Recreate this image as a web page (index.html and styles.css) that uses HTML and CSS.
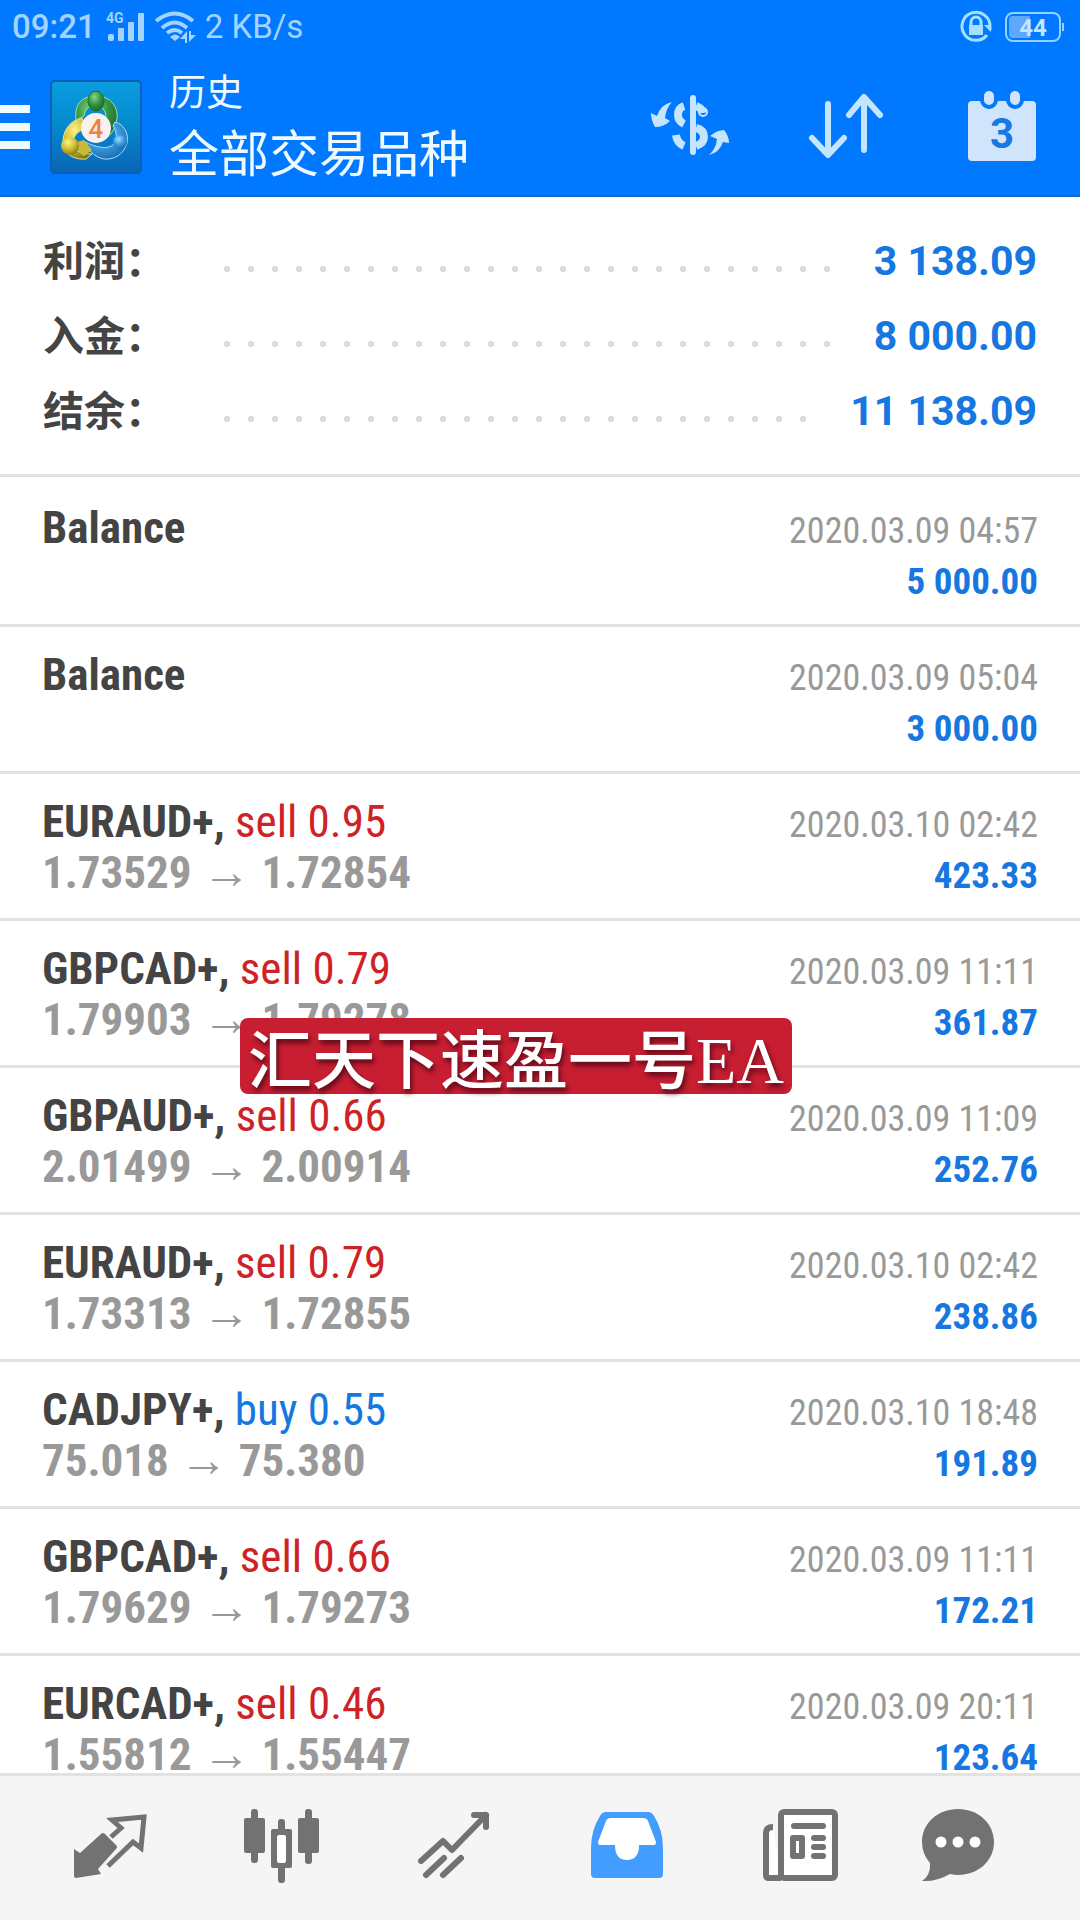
FILE: index.html
```html
<!DOCTYPE html>
<html lang="zh-CN">
<head>
<meta charset="utf-8">
<meta name="viewport" content="width=device-width, initial-scale=1">
<title>历史</title>
<link rel="stylesheet" href="styles.css">
</head>
<body>
<div class="app">
  <header class="header">
    <div class="status">
      <span class="clock">09:21</span>
      <svg class="signal" width="40" height="32" viewBox="0 0 40 32" aria-hidden="true">
        <text x="0" y="12" class="signal-text">4G</text>
        <rect x="2" y="23" width="6" height="7" rx="2"/><rect x="12" y="17" width="6" height="13" rx="1"/><rect x="22" y="11" width="6" height="19" rx="1"/><rect x="32" y="2" width="6" height="28" rx="1"/>
      </svg>
      <svg class="wifi" width="42" height="32" viewBox="0 0 42 32" aria-hidden="true">
        <g fill="none" stroke="currentColor" stroke-width="4"><path d="M1 10Q20 -5 38 10"/><path d="M7 17Q20 6 32 17"/><path d="M12 22Q20 16 27 22"/></g>
        <path d="M15 26Q20 21 25 26L20 30Z"/><path d="M25 28L32 20V32H30V28ZM34 20H36V24H41L34 31Z"/>
      </svg>
      <span class="speed">2 KB/s</span>
      <svg class="lock" width="34" height="34" viewBox="0 0 34 34" aria-hidden="true">
        <path d="M28 25A14 14 0 1 1 31 17V20" fill="none" stroke="currentColor" stroke-width="3"/>
        <path d="M25 15H32V22Z"/><rect x="10" y="15" width="14" height="10"/><path d="M12 16V12A5 5 0 0 1 22 12V16" fill="none" stroke="currentColor" stroke-width="3"/>
      </svg>
      <span class="battery">44</span>
    </div>
    <div class="toolbar">
      <button class="menu" aria-label="菜单"><i></i><i></i><i></i></button>
      <svg class="logo" width="92" height="94" viewBox="0 0 92 94" aria-hidden="true">
        <defs>
          <linearGradient id="sky" x1="0" y1="0" x2="0" y2="1"><stop offset="0" stop-color="#0a9ee0"/><stop offset=".5" stop-color="#0488cd"/><stop offset="1" stop-color="#0a64b8"/></linearGradient>
          <radialGradient id="green" cx=".4" cy=".3" r=".8"><stop offset="0" stop-color="#8fd47e"/><stop offset=".5" stop-color="#349440"/><stop offset="1" stop-color="#125f2b"/></radialGradient>
          <radialGradient id="gold" cx=".4" cy=".3" r=".8"><stop offset="0" stop-color="#fff38a"/><stop offset=".5" stop-color="#d0bb2c"/><stop offset="1" stop-color="#6f6e12"/></radialGradient>
          <radialGradient id="blue" cx=".4" cy=".3" r=".8"><stop offset="0" stop-color="#a5dcff"/><stop offset=".5" stop-color="#3a96da"/><stop offset="1" stop-color="#1262ab"/></radialGradient>
        </defs>
        <rect x="1" y="1" width="90" height="92" rx="4" fill="url(#sky)" stroke="#0c5fb5" stroke-width="2"/>
        <path d="M32 38C22 40 14 48 13 60C12 74 24 80 36 79L42 74C30 74 22 70 23 62C24 53 31 50 36 48Z" fill="url(#gold)" stroke="#e9e79a"/>
        <path d="M26 40C24 22 34 16 46 16C60 16 68 26 67 38C66 48 62 54 54 60L56 38C56 30 52 26 45 26C38 26 35 30 34 36Z" fill="url(#green)" stroke="#a8e0a0"/>
        <path d="M65 42C74 44 79 54 77 63C74 75 63 80 54 79C44 77 38 70 35 62C44 66 57 71 64 64C68 58 66 50 63 46Z" fill="url(#blue)" stroke="#a8dcff"/>
        <path d="M27 62L34 60L42 70L34 76Q26 72 27 62Z" fill="#c9bb3a"/>
        <ellipse cx="46" cy="21" rx="8" ry="10" fill="url(#green)" stroke="#1a6e36"/>
        <circle cx="20" cy="66" r="9" fill="url(#gold)"/><circle cx="70" cy="62" r="7" fill="url(#blue)"/>
        <circle cx="46" cy="48" r="15" fill="#f8f1ee"/>
        <text x="46" y="58" text-anchor="middle" class="logo-digit">4</text>
      </svg>
      <div class="titles">
        <h1 class="title">历史</h1>
        <p class="subtitle">全部交易品种</p>
      </div>
      <div class="actions">
        <button class="action" aria-label="货币">
          <svg width="96" height="96" viewBox="0 0 96 96" aria-hidden="true">
            <rect x="48" y="18" width="6" height="60" rx="3"/>
            <g fill="none" stroke="currentColor" stroke-width="8"><path d="M42 29Q36 31 36 38Q36 44 42 47"/><path d="M54 29Q60 31 61 36"/><circle cx="61" cy="35" r="1"/><path d="M54 51Q62 53 62 60Q62 66 54 69"/><path d="M34 58Q35 66 42 69"/></g>
            <path d="M30 25Q24 31 23 41L28 44Q22 50 13 50Q9 43 9 36L15 39Q19 27 30 25ZM67 78Q74 72 75 62L68 59Q75 53 82 53Q87 59 87 66L81 65Q77 76 67 78Z"/>
          </svg>
        </button>
        <button class="action" aria-label="排序">
          <svg width="96" height="96" viewBox="0 0 96 96" aria-hidden="true"><path d="M30 27V77M14 61L30 78L46 61M66 73V21M51 38L66 20L82 38" fill="none" stroke="currentColor" stroke-width="6" stroke-linecap="round" stroke-linejoin="round"/></svg>
        </button>
        <button class="action calendar" aria-label="日期">
          <svg width="96" height="96" viewBox="0 0 96 96" aria-hidden="true"><rect x="14" y="24" width="68" height="60" rx="4"/><g stroke="#0078ff" stroke-width="4"><rect x="28" y="12" width="14" height="18" rx="7"/><rect x="54" y="12" width="14" height="18" rx="7"/></g><text x="48" y="71" text-anchor="middle" class="calendar-day">3</text></svg>
        </button>
      </div>
    </div>
  </header>

  <main class="content">
    <dl class="summary">
      <div class="sum-row"><dt>利润：</dt><dd>3 138.09</dd></div>
      <div class="sum-row"><dt>入金：</dt><dd>8 000.00</dd></div>
      <div class="sum-row"><dt>结余：</dt><dd>11 138.09</dd></div>
    </dl>
    <ul class="deals">
      <li class="deal"><div class="line"><b class="symbol">Balance</b><time>2020.03.09 04:57</time></div><div class="line"><b class="profit">5 000.00</b></div></li>
      <li class="deal"><div class="line"><b class="symbol">Balance</b><time>2020.03.09 05:04</time></div><div class="line"><b class="profit">3 000.00</b></div></li>
      <li class="deal"><div class="line"><span class="symbol"><b>EURAUD+,</b> <span class="sell">sell 0.95</span></span><time>2020.03.10 02:42</time></div><div class="line"><b class="price">1.73529<span class="to">→</span>1.72854</b><b class="profit">423.33</b></div></li>
      <li class="deal"><div class="line"><span class="symbol"><b>GBPCAD+,</b> <span class="sell">sell 0.79</span></span><time>2020.03.09 11:11</time></div><div class="line"><b class="price">1.79903<span class="to">→</span>1.79278</b><b class="profit">361.87</b></div></li>
      <li class="deal"><div class="line"><span class="symbol"><b>GBPAUD+,</b> <span class="sell">sell 0.66</span></span><time>2020.03.09 11:09</time></div><div class="line"><b class="price">2.01499<span class="to">→</span>2.00914</b><b class="profit">252.76</b></div></li>
      <li class="deal"><div class="line"><span class="symbol"><b>EURAUD+,</b> <span class="sell">sell 0.79</span></span><time>2020.03.10 02:42</time></div><div class="line"><b class="price">1.73313<span class="to">→</span>1.72855</b><b class="profit">238.86</b></div></li>
      <li class="deal"><div class="line"><span class="symbol"><b>CADJPY+,</b> <span class="buy">buy 0.55</span></span><time>2020.03.10 18:48</time></div><div class="line"><b class="price">75.018<span class="to">→</span>75.380</b><b class="profit">191.89</b></div></li>
      <li class="deal"><div class="line"><span class="symbol"><b>GBPCAD+,</b> <span class="sell">sell 0.66</span></span><time>2020.03.09 11:11</time></div><div class="line"><b class="price">1.79629<span class="to">→</span>1.79273</b><b class="profit">172.21</b></div></li>
      <li class="deal"><div class="line"><span class="symbol"><b>EURCAD+,</b> <span class="sell">sell 0.46</span></span><time>2020.03.09 20:11</time></div><div class="line"><b class="price">1.55812<span class="to">→</span>1.55447</b><b class="profit">123.64</b></div></li>
    </ul>
  </main>

  <nav class="tabs">
    <a href="#quotes" aria-label="行情"><svg width="96" height="96" viewBox="0 0 96 96" aria-hidden="true"><path d="M12 49L18 53L39 34Q41 32 43 34L54 45Q56 47 54 49L36 69L39 74L14 78Q12 78 12 76Z"/><path d="M49 37L59 28L50 20L82 17L79 48L71 42L46 66" fill="none" stroke="currentColor" stroke-width="5"/></svg></a>
    <a href="#charts" aria-label="图表"><svg width="96" height="96" viewBox="0 0 96 96" aria-hidden="true"><rect x="10" y="18" width="21" height="35" rx="2"/><rect x="17" y="9" width="7" height="54" rx="3"/><rect x="37" y="29" width="21" height="39" rx="2"/><rect x="44" y="19" width="7" height="64" rx="3"/><rect x="43" y="35" width="9" height="28" rx="2" fill="#fff"/><rect x="64" y="18" width="21" height="35" rx="2"/><rect x="71" y="9" width="7" height="55" rx="3"/></svg></a>
    <a href="#trade" aria-label="交易"><svg width="96" height="96" viewBox="0 0 96 96" aria-hidden="true"><path d="M15 61L37 41L46 50L80 15M68 15H80V27M20 75L38 58M37 75L55 58" fill="none" stroke="currentColor" stroke-width="6" stroke-linecap="round" stroke-linejoin="round"/></svg></a>
    <a href="#history" class="active" aria-label="历史" aria-current="page"><svg width="96" height="96" viewBox="0 0 96 96" aria-hidden="true"><path d="M28 12H70Q74 12 76 16Q85 30 85 48V74Q85 78 81 78H17Q13 78 13 74V48Q13 30 22 16Q24 12 28 12Z"/><path d="M33 18H65Q69 18 70 21L78 42Q78 45 76 45H61Q61 60 49 60Q37 60 37 45H22Q20 45 20 42L28 21Q29 18 33 18Z" fill="#fff"/></svg></a>
    <a href="#news" aria-label="新闻"><svg width="96" height="96" viewBox="0 0 96 96" aria-hidden="true"><g fill="#fff" stroke="currentColor" stroke-width="6"><path d="M23 27Q16 27 16 33V75Q16 78 19 78H31"/><rect x="31" y="12" width="54" height="66" rx="3"/></g><rect x="41" y="23" width="35" height="6" rx="3"/><rect x="40" y="35" width="15" height="24" rx="3"/><rect x="46" y="41" width="3" height="12" fill="#fff"/><rect x="61" y="35" width="15" height="6" rx="3"/><rect x="61" y="44" width="15" height="6" rx="3"/><rect x="61" y="53" width="15" height="6" rx="3"/></svg></a>
    <a href="#messages" aria-label="消息"><svg width="96" height="96" viewBox="0 0 96 96" aria-hidden="true"><path d="M36 9C56 9 72 23 72 42C72 61 56 75 36 75Q32 75 28 74Q14 82 0 81Q9 75 8 63Q0 54 0 42C0 23 16 9 36 9Z"/><g fill="#fff"><circle cx="19" cy="42" r="5.500"/><circle cx="36" cy="42" r="5.500"/><circle cx="53" cy="42" r="5.500"/></g></svg></a>
  </nav>
  <p class="banner">汇天下速盈一号<span class="banner-latin">EA</span></p>
</div>
</body>
</html>
```

FILE: styles.css
```css
* { box-sizing: border-box; }
body { margin: 0; background: #fff; }
.app {
  position: relative;
  display: flex;
  flex-direction: column;
  height: 100vh;
  overflow: hidden;
  font-family: Roboto, "Noto Sans CJK SC", sans-serif;
  color: #444;
}
svg { display: block; fill: currentColor; }
button { border: 0; padding: 0; background: none; color: inherit; font: inherit; }

.header { flex: none; background: #0078ff; border-bottom: 2px solid #1068d0; }
.status {
  display: flex;
  align-items: center;
  height: 56px;
  padding: 0 16px 2px 12px;
  color: #a3d4ff;
  font-size: 33px;
  line-height: 40px;
}
.clock { font-weight: 500; }
.signal { margin-left: 10px; }
.signal-text { font-size: 14px; font-weight: 700; }
.wifi { margin-left: 9px; }
.speed { margin-left: 8px; }
.lock { margin-left: auto; color: #a6e0ff; }
.battery {
  position: relative;
  width: 56px;
  height: 30px;
  margin: 0 3px 0 12px;
  border: 2px solid #8fd4ff;
  border-radius: 8px;
  background: linear-gradient(90deg, #5fa8fb 44%, transparent 44%) content-box;
  padding: 2px;
  color: #c4e6ff;
  font-size: 24px;
  font-weight: 700;
  line-height: 24px;
  text-align: center;
}
.battery::after {
  content: "";
  position: absolute;
  right: -5px;
  top: 9px;
  width: 2px;
  height: 8px;
  background: #8fd4ff;
}
.toolbar { display: flex; align-items: center; height: 139px; padding-top: 3px; color: #effaff; }
.menu { display: grid; gap: 10px; width: 30px; }
.menu i { height: 8px; background: #effaff; }
.logo { margin-left: 20px; }
.logo-digit { font-size: 26px; font-weight: 500; fill: #f0803c; }
.titles { margin-left: 27px; }
.title, .subtitle { margin: 0; font-weight: 400; }
.title { font-size: 37px; line-height: 56px; }
.subtitle { font-size: 50px; line-height: 66px; }
.actions { display: flex; margin-left: auto; padding-bottom: 5px; color: #c4e5fc; }
.action { display: grid; place-items: center; width: 156px; }
.calendar { color: #d0e4fb; }
.calendar-day { font-size: 42px; font-weight: 700; fill: #1678e4; }

.content { flex: 1; min-height: 0; overflow: hidden; }
.summary { margin: 0; padding: 26px 43px 26px; border-bottom: 3px solid #e2e2e2; }
.sum-row { display: flex; align-items: center; height: 75px; }
.sum-row::after {
  content: "";
  order: 1;
  flex: 1;
  height: 6px;
  margin: 16px 35px 0 0;
  background: radial-gradient(circle, #dcdcdc 3px, transparent 3px) 0 0 / 24px 6px repeat-x;
}
dt { width: 172px; padding-bottom: 6px; font-size: 41px; font-weight: 700; font-family: "Noto Sans CJK SC", sans-serif; line-height: 60px; }
dd { order: 2; margin: 0; padding-top: 1px; font-size: 41px; font-weight: 700; color: #1677e0; }

.deals { list-style: none; margin: 0; padding: 3px 0 0; font-family: "Roboto Condensed", "Liberation Sans Narrow", sans-serif; }
.deal { height: 147px; padding: 22px 42px 0; border-bottom: 3px solid #e2e2e2; }
.line { display: flex; align-items: baseline; height: 51px; font-size: 45px; line-height: 51px; }
.line::before { content: "\200b"; }
.symbol, .price { white-space: pre; }
.price, time { color: #999; }
time { margin-left: auto; font-size: 36px; }
.profit { margin-left: auto; font-size: 37px; color: #1677e0; }
.sell { color: #cf2227; }
.buy { color: #1677e0; }
.to { margin: 0 11px; font-family: "Liberation Sans", sans-serif; font-size: 48px; font-weight: 400; line-height: 1; }

.tabs { flex: none; display: flex; height: 147px; padding: 0 24px; border-top: 3px solid #e2e2e2; background: #f5f5f5; color: #727272; }
.tabs a { flex: 1; display: grid; place-items: center; color: inherit; }
.tabs .active { color: #439cff; }

.banner {
  position: absolute;
  left: 240px;
  top: 1018px;
  margin: 0;
  padding: 0 8px;
  border-radius: 8px;
  background: #c81e32;
  color: #fff;
  font-size: 64px;
  font-weight: 500;
  line-height: 74px;
  white-space: nowrap;
  font-family: "Noto Sans CJK SC", sans-serif;
  text-shadow: 2px 4px 5px #5c0b18;
}
.banner-latin { font-family: "Liberation Serif", serif; font-size: 66px; line-height: 1; }
```
